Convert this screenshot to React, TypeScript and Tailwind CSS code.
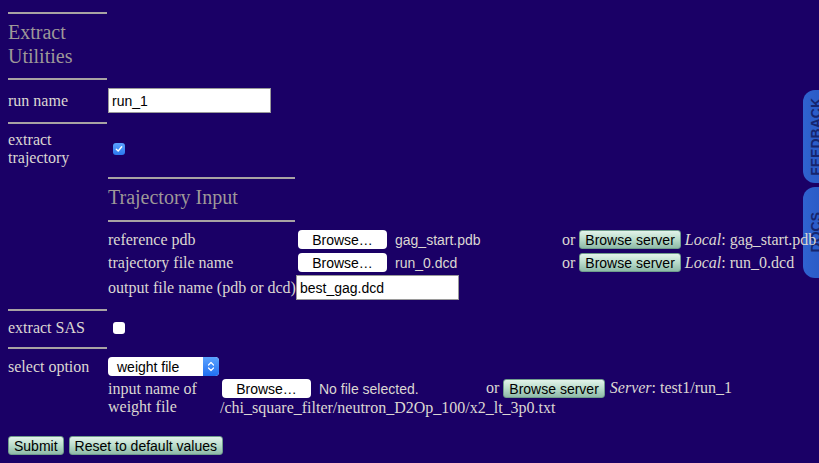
import React from 'react';

const sans = "font-['Liberation_Sans',Arial,sans-serif]";

function Hr({ w = 'w-[99px]', className = '' }: { w?: string; className?: string }) {
  return <div className={`h-[2px] bg-[#a8a3a3] ${w} ${className}`} />;
}

function FileButton() {
  return (
    <span
      className={`inline-flex h-[19px] w-[89px] shrink-0 items-center justify-center rounded-[4px] bg-white text-[14px] leading-none text-black ${sans}`}
    >
      Browse…
    </span>
  );
}

function GreenButton({ label, className = '' }: { label: string; className?: string }) {
  return (
    <span
      className={`inline-flex h-[19px] shrink-0 items-center rounded-[3px] border border-[#6f9c8c] bg-gradient-to-b from-[#e3f3ea] via-[#b9dccb] to-[#8fbaa8] px-[5px] text-[14px] leading-none text-black ${sans} ${className}`}
    >
      {label}
    </span>
  );
}

function Checkbox({ checked }: { checked?: boolean }) {
  if (!checked) {
    return <span className="ml-[5px] block h-[12px] w-[12px] rounded-[3px] bg-white" />;
  }
  return (
    <span className="ml-[5px] flex h-[12px] w-[12px] items-center justify-center rounded-[3px] bg-gradient-to-b from-[#5aa2ff] to-[#2b78ee]">
      <svg width="8" height="8" viewBox="0 0 8 8" fill="none">
        <path d="M1.3 4.2 L3.2 6 L6.7 1.8" stroke="white" strokeWidth="1.4" strokeLinecap="round" strokeLinejoin="round" />
      </svg>
    </span>
  );
}

function SideTab({ label, top, height }: { label: string; top: string; height: string }) {
  return (
    <div
      className={`absolute left-[803px] ${top} ${height} flex w-[40px] items-center rounded-l-[12px] bg-gradient-to-r from-[#2f62cf] to-[#2352bb] pl-[6px]`}
    >
      <span
        className={`rotate-180 text-[14px] font-bold leading-[14px] text-[#15256f] [writing-mode:vertical-rl] ${sans}`}
      >
        {label}
      </span>
    </div>
  );
}

export default function App() {
  return (
    <div className="relative h-[463px] w-full overflow-hidden bg-[#1a0066] font-['Liberation_Serif','Times_New_Roman',serif] text-[16px] leading-[18px] text-[#dcd7d2]">
      <SideTab label="FEEDBACK" top="top-[90px]" height="h-[93px]" />
      <SideTab label="DOCS" top="top-[187px]" height="h-[91px]" />

      <div className="relative z-10 px-2 pt-[12px]">
        <Hr />
        <h2 className="mt-[6px] w-[100px] text-[20px] leading-[24px] text-[#9e9898]">Extract Utilities</h2>
        <Hr className="mt-[10px]" />

        {/* run name */}
        <div className="mt-[8px] flex items-center">
          <div className="w-[100px] shrink-0">run name</div>
          <div
            className={`flex h-[25px] w-[163px] items-center border border-[#9a9a9a] bg-white pl-[3px] text-[14px] text-black ${sans}`}
          >
            run_1
          </div>
        </div>
        <Hr className="mt-[9px]" />

        {/* extract trajectory */}
        <div className="mt-[7px] flex items-center">
          <div className="w-[100px] shrink-0">
            extract
            <br />
            trajectory
          </div>
          <Checkbox checked />
        </div>

        {/* trajectory input */}
        <div className="ml-[100px] mt-[10px]">
          <Hr w="w-[187px]" />
          <h3 className="mt-[6px] text-[20px] leading-[24px] text-[#9e9898]">Trajectory Input</h3>
          <Hr w="w-[187px]" className="mt-[11px]" />

          <div className="mt-[8px] flex h-[19px] items-center whitespace-nowrap">
            <div className="w-[188px] shrink-0">reference pdb</div>
            <div className={`flex w-[266px] shrink-0 items-center text-[14px] ${sans}`}>
              <span className="ml-[2px] flex">
                <FileButton />
              </span>
              <span className="ml-[8px]">gag_start.pdb</span>
            </div>
            <span className="shrink-0">or</span>
            <GreenButton label="Browse server" className="ml-[4px]" />
            <span className="ml-[4px] shrink-0">
              <i>Local</i>: gag_start.pdb
            </span>
          </div>

          <div className="mt-[4px] flex h-[19px] items-center whitespace-nowrap">
            <div className="w-[188px] shrink-0">trajectory file name</div>
            <div className={`flex w-[266px] shrink-0 items-center text-[14px] ${sans}`}>
              <span className="ml-[2px] flex">
                <FileButton />
              </span>
              <span className="ml-[8px]">run_0.dcd</span>
            </div>
            <span className="shrink-0">or</span>
            <GreenButton label="Browse server" className="ml-[4px]" />
            <span className="ml-[4px] shrink-0">
              <i>Local</i>: run_0.dcd
            </span>
          </div>

          <div className="mt-[3px] flex items-center whitespace-nowrap">
            <div className="w-[188px] shrink-0">output file name (pdb or dcd)</div>
            <div
              className={`flex h-[25px] w-[163px] shrink-0 items-center border border-[#9a9a9a] bg-white pl-[3px] text-[14px] text-black ${sans}`}
            >
              best_gag.dcd
            </div>
          </div>
        </div>

        <Hr className="mt-[9px]" />

        {/* extract SAS */}
        <div className="mt-[8px] flex items-center">
          <div className="w-[100px] shrink-0">extract SAS</div>
          <Checkbox />
        </div>
        <Hr className="mt-[10px]" />

        {/* select option */}
        <div className="mt-[8px] flex items-start">
          <div className="w-[100px] shrink-0 pt-[1px]">select option</div>
          <div className="flex h-[19px] w-[111px] items-stretch rounded-[4px] bg-white">
            <span className={`flex flex-1 items-center pl-[9px] text-[14px] text-black ${sans}`}>weight file</span>
            <span className="flex w-[16px] items-center justify-center rounded-r-[4px] bg-gradient-to-b from-[#5ba3ff] to-[#1f6ef0]">
              <svg width="8" height="13" viewBox="0 0 8 13" fill="none">
                <path d="M1.5 5 L4 2.5 L6.5 5" stroke="white" strokeWidth="1.2" strokeLinecap="round" strokeLinejoin="round" />
                <path d="M1.5 8 L4 10.5 L6.5 8" stroke="white" strokeWidth="1.2" strokeLinecap="round" strokeLinejoin="round" />
              </svg>
            </span>
          </div>
        </div>

        <div className="ml-[100px] mt-[3px] flex items-start">
          <div className="w-[112px] shrink-0 pt-[1px]">input name of weight file</div>
          <div className="flex flex-col">
            <div className="flex h-[20px] items-start whitespace-nowrap">
              <div className={`flex w-[266px] shrink-0 items-center text-[14px] ${sans}`}>
                <span className="ml-[2px] flex">
                  <FileButton />
                </span>
                <span className="ml-[8px]">No file selected.</span>
              </div>
              <span className="shrink-0">or</span>
              <GreenButton label="Browse server" className="ml-[4px]" />
              <span className="ml-[5px] shrink-0">
                <i>Server</i>: test1/run_1
              </span>
            </div>
            <div>/chi_square_filter/neutron_D2Op_100/x2_lt_3p0.txt</div>
          </div>
        </div>

        {/* actions */}
        <div className="mt-[19px] flex gap-[5px]">
          <GreenButton label="Submit" />
          <GreenButton label="Reset to default values" />
        </div>
      </div>
    </div>
  );
}
